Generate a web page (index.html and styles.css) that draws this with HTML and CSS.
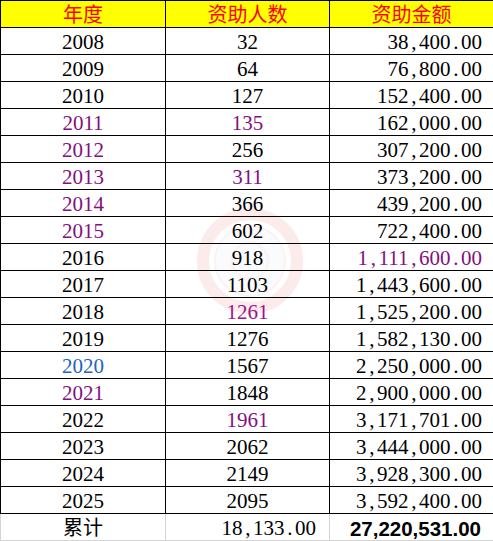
FILE: index.html
```html
<!DOCTYPE html>
<html lang="zh">
<head>
<meta charset="utf-8">
<title>资助统计</title>
<link rel="stylesheet" href="styles.css">
</head>
<body>
<div class="sheet">
<svg class="mark" width="110" height="110" viewBox="0 0 110 110" aria-hidden="true">
<circle cx="55" cy="55" r="47" fill="none" stroke="#f8d4d4" stroke-width="12"/>
<circle cx="55" cy="55" r="35" fill="#f4f7fb" stroke="#fae4e4" stroke-width="2"/>
<circle cx="55" cy="55" r="18" fill="none" stroke="#f9e4e4" stroke-width="3"/>
</svg>
<table class="grid">
<colgroup><col class="c1"><col class="c2"><col class="c3"></colgroup>
<thead>
<tr class="head"><th>年度</th><th>资助人数</th><th>资助金额</th></tr>
</thead>
<tbody>
<tr><td>2008</td><td>32</td><td class="amt">38<span class="p">,</span>400<span class="p">.</span>00</td></tr>
<tr><td>2009</td><td>64</td><td class="amt">76<span class="p">,</span>800<span class="p">.</span>00</td></tr>
<tr><td>2010</td><td>127</td><td class="amt">152<span class="p">,</span>400<span class="p">.</span>00</td></tr>
<tr><td class="pur">2011</td><td class="pur">135</td><td class="amt">162<span class="p">,</span>000<span class="p">.</span>00</td></tr>
<tr><td class="pur">2012</td><td>256</td><td class="amt">307<span class="p">,</span>200<span class="p">.</span>00</td></tr>
<tr><td class="pur">2013</td><td class="pur">311</td><td class="amt">373<span class="p">,</span>200<span class="p">.</span>00</td></tr>
<tr><td class="pur">2014</td><td>366</td><td class="amt">439<span class="p">,</span>200<span class="p">.</span>00</td></tr>
<tr><td class="pur">2015</td><td>602</td><td class="amt">722<span class="p">,</span>400<span class="p">.</span>00</td></tr>
<tr><td>2016</td><td>918</td><td class="amt pur">1<span class="p">,</span>111<span class="p">,</span>600<span class="p">.</span>00</td></tr>
<tr><td>2017</td><td>1103</td><td class="amt">1<span class="p">,</span>443<span class="p">,</span>600<span class="p">.</span>00</td></tr>
<tr><td>2018</td><td class="mag">1261</td><td class="amt">1<span class="p">,</span>525<span class="p">,</span>200<span class="p">.</span>00</td></tr>
<tr><td>2019</td><td>1276</td><td class="amt">1<span class="p">,</span>582<span class="p">,</span>130<span class="p">.</span>00</td></tr>
<tr><td class="blu">2020</td><td>1567</td><td class="amt">2<span class="p">,</span>250<span class="p">,</span>000<span class="p">.</span>00</td></tr>
<tr><td class="pur">2021</td><td>1848</td><td class="amt">2<span class="p">,</span>900<span class="p">,</span>000<span class="p">.</span>00</td></tr>
<tr><td>2022</td><td class="pur">1961</td><td class="amt">3<span class="p">,</span>171<span class="p">,</span>701<span class="p">.</span>00</td></tr>
<tr><td>2023</td><td>2062</td><td class="amt">3<span class="p">,</span>444<span class="p">,</span>000<span class="p">.</span>00</td></tr>
<tr><td>2024</td><td>2149</td><td class="amt">3<span class="p">,</span>928<span class="p">,</span>300<span class="p">.</span>00</td></tr>
<tr><td>2025</td><td>2095</td><td class="amt">3<span class="p">,</span>592<span class="p">,</span>400<span class="p">.</span>00</td></tr>
<tr class="total"><td class="cjk">累计</td><td class="sum">18<span class="p">,</span>133<span class="p">.</span>00</td><td class="grand">27,220,531.00</td></tr>
</tbody>
</table>
</div>
</body>
</html>
```
FILE: styles.css
```css
html, body {
  margin: 0;
  padding: 0;
  background: #ffffff;
}
.sheet {
  position: relative;
  width: 493px;
  height: 541px;
  overflow: hidden;
}
.grid {
  position: relative;
  z-index: 1;
  border-collapse: collapse;
  table-layout: fixed;
  width: 493px;
  font-family: "Liberation Serif", "Noto Sans CJK SC", serif;
  font-size: 21px;
  color: #000;
}
.c1 { width: 165px; }
.c2 { width: 164px; }
.c3 { width: 164px; }
.grid th,
.grid td {
  border: 1px solid #000;
  padding: 3px 0 0;
  height: 23px;
  line-height: 23px;
  text-align: center;
  white-space: nowrap;
  overflow: hidden;
}
.head th {
  background: #ffff00;
  color: #ff0000;
  font-family: "Noto Sans CJK SC", sans-serif;
  font-weight: normal;
  font-size: 20px;
  padding: 0;
  height: 26px;
  line-height: 26px;
}
.grid td.amt {
  text-align: right;
  padding-right: 11px;
}
.p {
  display: inline-block;
  width: 0.5em;
  text-align: center;
}
.pur { color: #84107e; }
.mag { color: #a0108c; }
.blu { color: #2462c4; }
.grid .total td {
  border-color: #d4d4d4;
  border-top-color: #000;
}
.grid td.cjk {
  font-family: "Noto Sans CJK SC", sans-serif;
  font-size: 20px;
  padding-top: 0;
  height: 26px;
  line-height: 26px;
}
.grid td.sum {
  text-align: right;
  padding-right: 13px;
}
.grid td.grand {
  text-align: right;
  padding-right: 12px;
  font-family: "Liberation Sans", sans-serif;
  font-weight: bold;
  font-size: 20.5px;
}
.mark {
  position: absolute;
  z-index: 0;
  left: 195px;
  top: 206px;
  opacity: 0.45;
  pointer-events: none;
}
```
